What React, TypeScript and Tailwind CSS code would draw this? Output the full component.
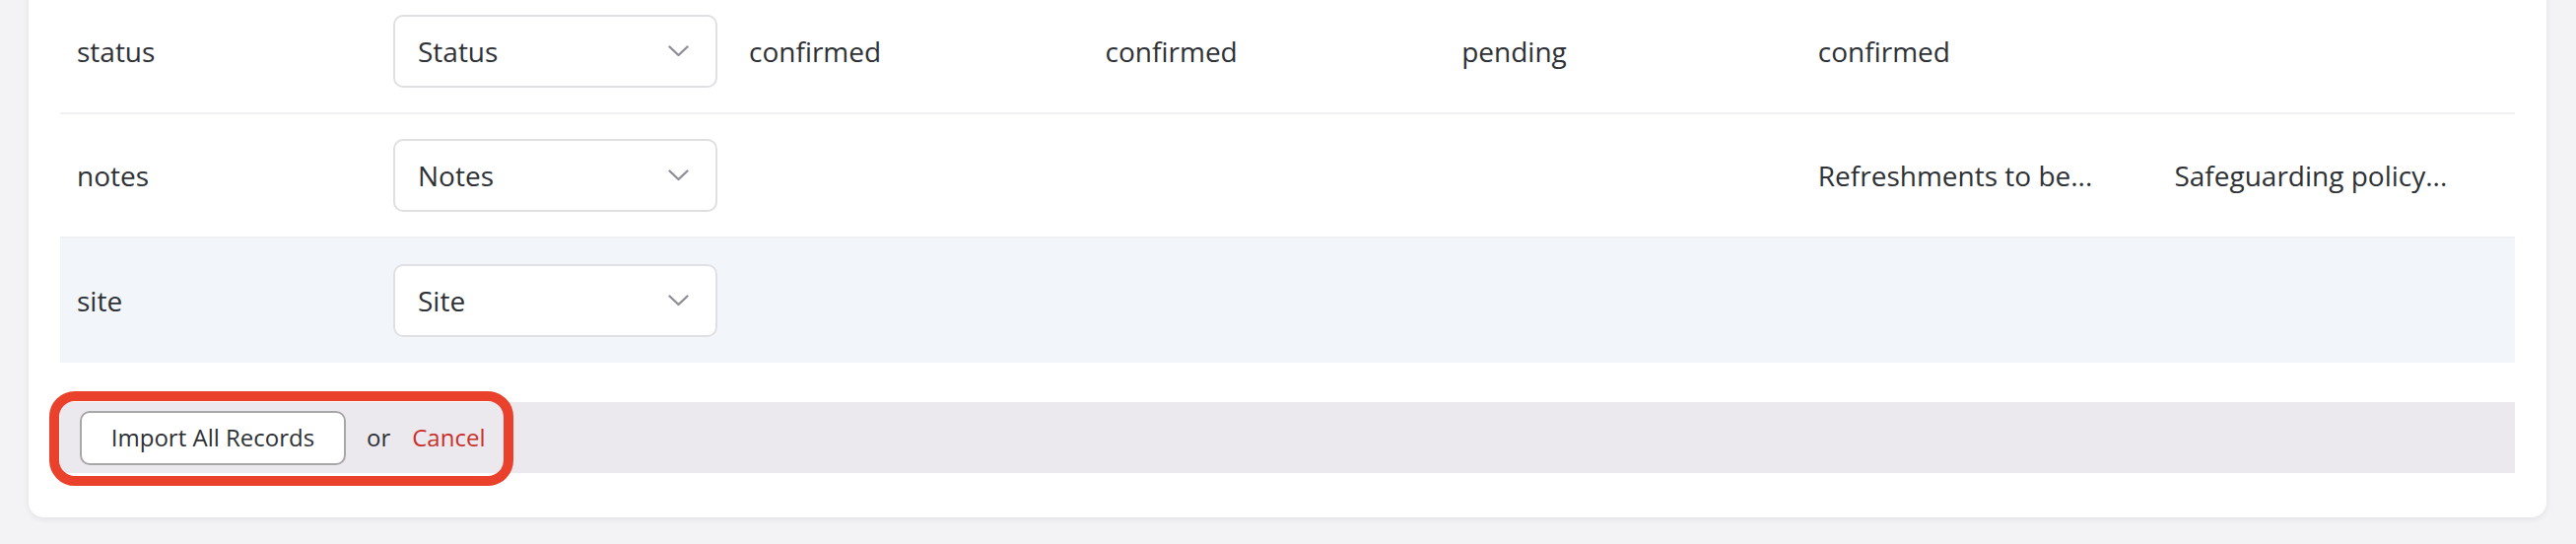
import React from "react";

type Row = {
  field: string;
  label: string;
  values: string[];
  highlight?: boolean;
};

const rows: Row[] = [
  { field: "status", label: "Status", values: ["confirmed", "confirmed", "pending", "confirmed", ""] },
  { field: "notes", label: "Notes", values: ["", "", "", "Refreshments to be...", "Safeguarding policy..."] },
  { field: "site", label: "Site", values: ["", "", "", "", ""], highlight: true },
];

function Chevron() {
  return (
    <svg width="21" height="12" viewBox="0 0 21 12" fill="none" className="shrink-0">
      <path d="M1.5 1.5 L10.5 10 L19.5 1.5" stroke="#8f8f97" strokeWidth="2.4" strokeLinecap="round" strokeLinejoin="round" />
    </svg>
  );
}

function FieldSelect({ label }: { label: string }) {
  return (
    <div className="flex h-[74px] w-[329px] items-center justify-between rounded-[10px] border-2 border-[#e0e0e4] bg-white pl-[23px] pr-[27px] text-[28px] text-[#2e3135]">
      <span>{label}</span>
      <Chevron />
    </div>
  );
}

export default function App() {
  return (
    <div className="h-[552px] w-full overflow-hidden bg-[#f3f2f4] font-['Open_Sans',sans-serif]">
      <div className="-mt-[10px] ml-[29px] mr-[30px] rounded-b-[15px] bg-white px-[32px] pb-[45px] shadow-[0_2px_6px_rgba(0,0,0,0.07)]">
        {/* mapping rows */}
        <div className="flex flex-col">
          {rows.map((row) => (
            <div
              key={row.field}
              className={`grid h-[126px] grid-cols-[322px_361px_repeat(5,1fr)] items-center text-[28px] text-[#2e3135] ${
                row.highlight ? "bg-[#f2f6fa]" : "border-b-2 border-[#eff0f3]"
              }`}
            >
              <div className="pl-[17px]">{row.field}</div>
              <div className="pl-[16px]">
                <FieldSelect label={row.label} />
              </div>
              {row.values.map((v, i) => (
                <div key={i} className="truncate pl-[16px] pr-[16px]">
                  {v}
                </div>
              ))}
            </div>
          ))}
        </div>

        {/* actions */}
        <div className="relative mt-[40px] flex h-[72px] items-center bg-[#ece9ee] pl-[20px] text-[24px] text-[#2e3135]">
          <button className="flex h-[55px] w-[270px] items-center justify-center rounded-[10px] border-2 border-[#a7a7a7] bg-white">
            Import All Records
          </button>
          <span className="ml-[21px]">or</span>
          <span className="ml-[22px] text-[#c9302c]">Cancel</span>

          {/* annotation outline */}
          <div className="pointer-events-none absolute -left-[11px] -top-[11px] h-[96px] w-[471px] rounded-[26px] border-[10px] border-[#e9412b]" />
        </div>
      </div>
    </div>
  );
}
